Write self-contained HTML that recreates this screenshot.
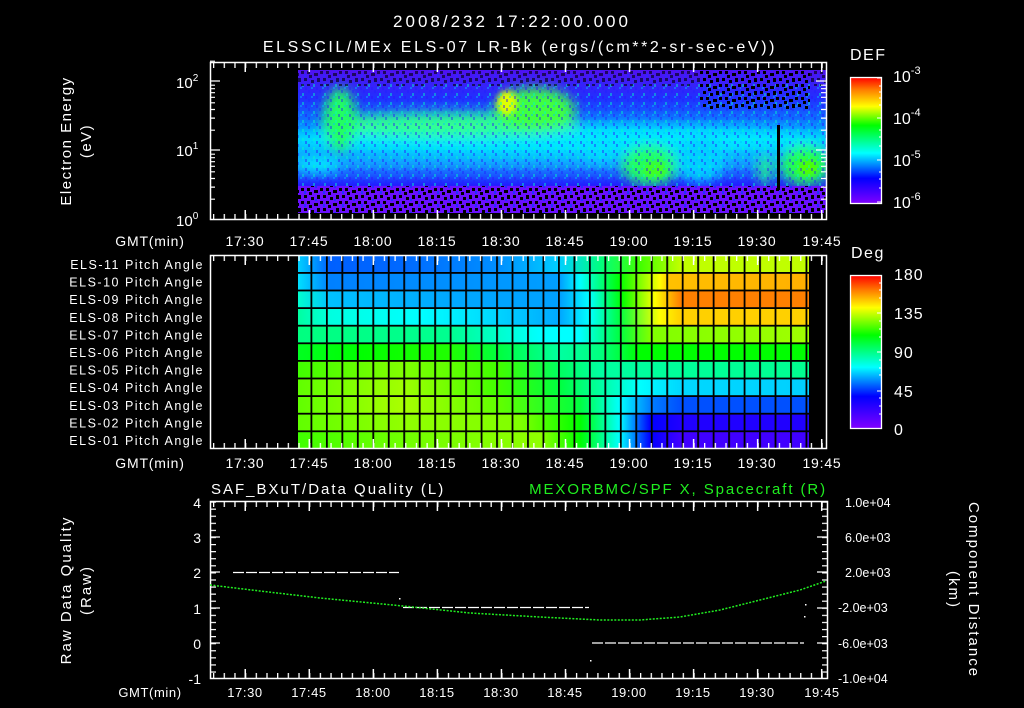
<!DOCTYPE html>
<html><head><meta charset="utf-8"><style>
html,body{margin:0;padding:0;background:#000;width:1024px;height:708px;overflow:hidden}
svg{display:block}
text{font-family:"Liberation Sans",sans-serif;fill:#fff}
</style></head><body>
<svg width="1024" height="708" viewBox="0 0 1024 708" xmlns="http://www.w3.org/2000/svg">
<defs>
<pattern id="minT" x="245" y="0" width="10.675" height="708" patternUnits="userSpaceOnUse"><rect x="0" y="0" width="1.3" height="708" fill="#fff"/></pattern>
<pattern id="majT" x="244.5" y="0" width="64.05" height="708" patternUnits="userSpaceOnUse"><rect x="0" y="0" width="1.5" height="708" fill="#fff"/></pattern>
<pattern id="vgrid" x="310.5" y="0" width="15.47" height="708" patternUnits="userSpaceOnUse"><rect x="0" y="0" width="1.8" height="708" fill="#000"/></pattern>
<pattern id="lqT" x="0" y="501.5" width="1024" height="7.08" patternUnits="userSpaceOnUse"><rect x="0" y="0" width="1024" height="1.2" fill="#fff"/></pattern>
<pattern id="speck" x="0" y="0" width="19" height="13" patternUnits="userSpaceOnUse">
<rect x="0" y="0" width="3" height="3" fill="#000"/><rect x="7" y="2" width="3" height="3" fill="#000"/><rect x="13" y="0" width="3" height="4" fill="#000"/><rect x="3" y="6" width="3" height="3" fill="#000"/><rect x="10" y="8" width="4" height="3" fill="#000"/><rect x="16" y="6" width="3" height="3" fill="#000"/><rect x="5" y="10" width="3" height="3" fill="#000"/><rect x="11" y="4" width="2" height="2" fill="#2030ff"/><rect x="0" y="9" width="2" height="3" fill="#2030ff"/></pattern>
<pattern id="noise" x="0" y="0" width="11" height="9" patternUnits="userSpaceOnUse">
<rect x="0" y="0" width="2" height="3" fill="#2020ff"/><rect x="5" y="3" width="2" height="3" fill="#00ffc0"/><rect x="8" y="6" width="2" height="3" fill="#3010ff"/><rect x="3" y="6" width="2" height="2" fill="#00c0ff"/></pattern>
<linearGradient id="defbar" x1="0" y1="0" x2="0" y2="1">
<stop offset="0" stop-color="#ff0000"/><stop offset="0.1" stop-color="#ff8000"/><stop offset="0.23" stop-color="#ffff00"/><stop offset="0.38" stop-color="#00ff00"/><stop offset="0.6" stop-color="#00ffff"/><stop offset="0.8" stop-color="#0000ff"/><stop offset="1" stop-color="#8000ff"/></linearGradient>
<linearGradient id="degbar" x1="0" y1="0" x2="0" y2="1">
<stop offset="0" stop-color="#ff0000"/><stop offset="0.1" stop-color="#ff8000"/><stop offset="0.21" stop-color="#ffff00"/><stop offset="0.39" stop-color="#00ff00"/><stop offset="0.6" stop-color="#00ffff"/><stop offset="0.79" stop-color="#0000ff"/><stop offset="1" stop-color="#8000ff"/></linearGradient>
<linearGradient id="specv" x1="0" y1="70" x2="0" y2="213" gradientUnits="userSpaceOnUse">
<stop offset="0" stop-color="#5010f0"/><stop offset="0.2" stop-color="#2030ff"/><stop offset="0.45" stop-color="#00a0ff"/><stop offset="0.65" stop-color="#10a0ff"/><stop offset="0.8" stop-color="#2020ff"/><stop offset="0.88" stop-color="#6010ff"/><stop offset="1" stop-color="#6a00ff"/></linearGradient>
<filter id="bl" x="-20%" y="-50%" width="140%" height="200%"><feGaussianBlur stdDeviation="6"/></filter>
<filter id="bl2" x="-20%" y="-50%" width="140%" height="200%"><feGaussianBlur stdDeviation="3"/></filter>
<clipPath id="specclip"><rect x="298" y="70" width="528" height="143"/></clipPath>
<linearGradient id="r11" x1="298" x2="809" y1="0" y2="0" gradientUnits="userSpaceOnUse"><stop offset="0" stop-color="#00d0ff"/><stop offset=".063" stop-color="#0060ff"/><stop offset=".2" stop-color="#0068ff"/><stop offset=".395" stop-color="#0090ff"/><stop offset=".513" stop-color="#00d0ff"/><stop offset=".591" stop-color="#00ff80"/><stop offset=".669" stop-color="#40ff00"/><stop offset=".748" stop-color="#c0ff00"/><stop offset="1" stop-color="#c0ff00"/></linearGradient>
<linearGradient id="r10" x1="298" x2="809" y1="0" y2="0" gradientUnits="userSpaceOnUse"><stop offset="0" stop-color="#00e0ff"/><stop offset=".063" stop-color="#0080ff"/><stop offset=".297" stop-color="#0090ff"/><stop offset=".513" stop-color="#00a0ff"/><stop offset=".552" stop-color="#00ffff"/><stop offset=".630" stop-color="#00ff00"/><stop offset=".708" stop-color="#ffff00"/><stop offset=".728" stop-color="#ffc000"/><stop offset="1" stop-color="#ffb000"/></linearGradient>
<linearGradient id="r9" x1="298" x2="809" y1="0" y2="0" gradientUnits="userSpaceOnUse"><stop offset="0" stop-color="#00ffd0"/><stop offset=".063" stop-color="#00c0ff"/><stop offset=".297" stop-color="#00a8ff"/><stop offset=".513" stop-color="#00a0ff"/><stop offset=".571" stop-color="#00ffff"/><stop offset=".634" stop-color="#00ff00"/><stop offset=".699" stop-color="#ffff00"/><stop offset=".748" stop-color="#ff8000"/><stop offset="1" stop-color="#ff8000"/></linearGradient>
<linearGradient id="r8" x1="298" x2="809" y1="0" y2="0" gradientUnits="userSpaceOnUse"><stop offset="0" stop-color="#00ffa0"/><stop offset=".063" stop-color="#00ffe0"/><stop offset=".239" stop-color="#00ffff"/><stop offset=".356" stop-color="#00e0ff"/><stop offset=".513" stop-color="#00a8ff"/><stop offset=".571" stop-color="#00ffff"/><stop offset=".630" stop-color="#00ff40"/><stop offset=".708" stop-color="#ffff00"/><stop offset=".748" stop-color="#ffd000"/><stop offset="1" stop-color="#ffd000"/></linearGradient>
<linearGradient id="r7" x1="298" x2="809" y1="0" y2="0" gradientUnits="userSpaceOnUse"><stop offset="0" stop-color="#00ff80"/><stop offset=".297" stop-color="#00ff90"/><stop offset=".474" stop-color="#00ffff"/><stop offset=".552" stop-color="#00ffff"/><stop offset=".630" stop-color="#00ff40"/><stop offset=".689" stop-color="#80ff00"/><stop offset="1" stop-color="#a0ff00"/></linearGradient>
<linearGradient id="r6" x1="298" x2="809" y1="0" y2="0" gradientUnits="userSpaceOnUse"><stop offset="0" stop-color="#00ff20"/><stop offset=".121" stop-color="#00ff00"/><stop offset=".297" stop-color="#20ff00"/><stop offset=".395" stop-color="#00ff40"/><stop offset=".513" stop-color="#00ffa0"/><stop offset=".591" stop-color="#00ff80"/><stop offset=".669" stop-color="#00ff00"/><stop offset="1" stop-color="#00ff00"/></linearGradient>
<linearGradient id="r5" x1="298" x2="809" y1="0" y2="0" gradientUnits="userSpaceOnUse"><stop offset="0" stop-color="#40ff00"/><stop offset=".2" stop-color="#80ff00"/><stop offset=".395" stop-color="#40ff00"/><stop offset=".513" stop-color="#00ff60"/><stop offset=".591" stop-color="#00ffa0"/><stop offset="1" stop-color="#00ff90"/></linearGradient>
<linearGradient id="r4" x1="298" x2="809" y1="0" y2="0" gradientUnits="userSpaceOnUse"><stop offset="0" stop-color="#60ff00"/><stop offset=".2" stop-color="#a0ff00"/><stop offset=".395" stop-color="#40ff00"/><stop offset=".513" stop-color="#00ff40"/><stop offset=".591" stop-color="#00ffa0"/><stop offset=".669" stop-color="#00ffff"/><stop offset=".748" stop-color="#00d8ff"/><stop offset="1" stop-color="#00d0ff"/></linearGradient>
<linearGradient id="r3" x1="298" x2="809" y1="0" y2="0" gradientUnits="userSpaceOnUse"><stop offset="0" stop-color="#60ff00"/><stop offset=".2" stop-color="#a8ff00"/><stop offset=".395" stop-color="#60ff00"/><stop offset=".552" stop-color="#00ff40"/><stop offset=".630" stop-color="#00ffff"/><stop offset=".689" stop-color="#0080ff"/><stop offset=".748" stop-color="#0050ff"/><stop offset="1" stop-color="#0050ff"/></linearGradient>
<linearGradient id="r2" x1="298" x2="809" y1="0" y2="0" gradientUnits="userSpaceOnUse"><stop offset="0" stop-color="#60ff00"/><stop offset=".2" stop-color="#90ff00"/><stop offset=".434" stop-color="#80ff00"/><stop offset=".552" stop-color="#00ff00"/><stop offset=".630" stop-color="#00ffff"/><stop offset=".689" stop-color="#0000ff"/><stop offset=".748" stop-color="#2000ff"/><stop offset="1" stop-color="#2000ff"/></linearGradient>
<linearGradient id="r1" x1="298" x2="809" y1="0" y2="0" gradientUnits="userSpaceOnUse"><stop offset="0" stop-color="#40ff00"/><stop offset=".2" stop-color="#70ff00"/><stop offset=".474" stop-color="#90ff00"/><stop offset=".552" stop-color="#00ff00"/><stop offset=".630" stop-color="#00ffff"/><stop offset=".689" stop-color="#0000ff"/><stop offset=".748" stop-color="#4000ff"/><stop offset="1" stop-color="#4000ff"/></linearGradient>
</defs>

<text x="512" y="27" font-size="17" text-anchor="middle" letter-spacing="3">2008/232 17:22:00.000</text>
<text x="520" y="52" font-size="16" text-anchor="middle" letter-spacing="2.6">ELSSCIL/MEx ELS-07 LR-Bk  (ergs/(cm**2-sr-sec-eV))</text>

<g clip-path="url(#specclip)">
<rect x="298" y="70" width="528" height="143" fill="url(#specv)"/>
<g filter="url(#bl)">
<ellipse cx="560" cy="140" rx="280" ry="16" fill="#00e8ff"/>
<ellipse cx="450" cy="125" rx="130" ry="12" fill="#30ff90"/>
<ellipse cx="340" cy="120" rx="16" ry="32" fill="#20ff60"/>
<ellipse cx="318" cy="165" rx="22" ry="7" fill="#00f0ff"/>
<ellipse cx="535" cy="110" rx="40" ry="22" fill="#40ff40"/>
<ellipse cx="650" cy="165" rx="28" ry="20" fill="#20ff60"/>
<ellipse cx="700" cy="160" rx="25" ry="22" fill="#00d0ff"/>
<ellipse cx="805" cy="165" rx="24" ry="20" fill="#20ff50"/>
<ellipse cx="600" cy="150" rx="20" ry="12" fill="#00e0ff"/>
<ellipse cx="765" cy="170" rx="6" ry="16" fill="#20ff80"/>
</g>
<g filter="url(#bl2)">
<ellipse cx="507" cy="103" rx="10" ry="12" fill="#e0ff00"/>
<ellipse cx="655" cy="170" rx="12" ry="8" fill="#40ff20"/>
<ellipse cx="808" cy="168" rx="10" ry="8" fill="#50ff00"/>
</g>
<rect x="298" y="84" width="528" height="102" fill="url(#noise)" opacity="0.45"/>
<rect x="298" y="186" width="528" height="27" fill="#6a10ff"/>
<rect x="298" y="186" width="528" height="27" fill="url(#speck)"/>
<rect x="298" y="70" width="528" height="16" fill="url(#speck)" opacity="0.6"/>
<rect x="700" y="70" width="110" height="40" fill="url(#speck)"/>
<rect x="777" y="125" width="3" height="65" fill="#000"/>
</g>
<rect x="210.5" y="62.5" width="616" height="157" fill="none" stroke="#fff" stroke-width="1.5"/>
<rect x="211" y="62" width="615" height="6" fill="url(#minT)"/>
<rect x="211" y="62" width="615" height="10" fill="url(#majT)"/>
<rect x="211" y="214" width="615" height="6" fill="url(#minT)"/>
<rect x="211" y="210" width="615" height="10" fill="url(#majT)"/>
<g stroke="#fff" stroke-width="1.2">
<path d="M210 150h10M210 81h10M210 199.2h5M210 187.1h5M210 178.5h5M210 171.8h5M210 166.3h5M210 161.7h5M210 157.7h5M210 154.2h5M210 130.2h5M210 118.1h5M210 109.5h5M210 102.8h5M210 97.3h5M210 92.7h5M210 88.7h5M210 85.2h5M210 61.2h5"/>
<path d="M826 150h-10M826 81h-10M826 199.2h-5M826 187.1h-5M826 178.5h-5M826 171.8h-5M826 166.3h-5M826 161.7h-5M826 157.7h-5M826 154.2h-5M826 130.2h-5M826 118.1h-5M826 109.5h-5M826 102.8h-5M826 97.3h-5M826 92.7h-5M826 88.7h-5M826 85.2h-5"/>
</g>
<text x="176" y="226" font-size="15">10<tspan font-size="10" dy="-7">0</tspan></text>
<text x="176" y="156" font-size="15">10<tspan font-size="10" dy="-7">1</tspan></text>
<text x="176" y="88" font-size="15">10<tspan font-size="10" dy="-7">2</tspan></text>
<text transform="translate(71 141) rotate(-90)" font-size="15" text-anchor="middle" letter-spacing="1.5">Electron Energy</text>
<text transform="translate(91 141) rotate(-90)" font-size="15" text-anchor="middle" letter-spacing="1.5">(eV)</text>
<g font-size="14" text-anchor="middle" letter-spacing="0.8">
<text x="150" y="246">GMT(min)</text>
<text x="245" y="246">17:30</text><text x="309" y="246">17:45</text><text x="373" y="246">18:00</text><text x="437" y="246">18:15</text><text x="501" y="246">18:30</text><text x="565" y="246">18:45</text><text x="629" y="246">19:00</text><text x="693" y="246">19:15</text><text x="757" y="246">19:30</text><text x="822" y="246">19:45</text>
</g>
<text x="850" y="60" font-size="16" letter-spacing="1.5">DEF</text>
<rect x="850.5" y="77.5" width="31" height="126" fill="url(#defbar)" stroke="#fff" stroke-width="1.3"/>
<g stroke="#fff" stroke-width="1"><path d="M882 78h-5M882 86h-3M882 92h-3M882 98h-3M882 105h-3M882 118h-5M882 130h-3M882 137h-3M882 146h-3M882 160h-5M882 172h-3M882 179h-3M882 188h-3M882 202h-5"/></g>
<g font-size="16"><text x="893" y="82">10<tspan font-size="11" dy="-8">-3</tspan></text><text x="893" y="124">10<tspan font-size="11" dy="-8">-4</tspan></text><text x="893" y="166">10<tspan font-size="11" dy="-8">-5</tspan></text><text x="893" y="208">10<tspan font-size="11" dy="-8">-6</tspan></text></g>

<rect x="298" y="255" width="511" height="17.7" fill="url(#r11)"/>
<rect x="298" y="272.6" width="511" height="17.7" fill="url(#r10)"/>
<rect x="298" y="290.2" width="511" height="17.7" fill="url(#r9)"/>
<rect x="298" y="307.8" width="511" height="17.7" fill="url(#r8)"/>
<rect x="298" y="325.4" width="511" height="17.7" fill="url(#r7)"/>
<rect x="298" y="343" width="511" height="17.7" fill="url(#r6)"/>
<rect x="298" y="360.6" width="511" height="17.7" fill="url(#r5)"/>
<rect x="298" y="378.2" width="511" height="17.7" fill="url(#r4)"/>
<rect x="298" y="395.8" width="511" height="17.7" fill="url(#r3)"/>
<rect x="298" y="413.4" width="511" height="17.7" fill="url(#r2)"/>
<rect x="298" y="431" width="511" height="18" fill="url(#r1)"/>
<rect x="298" y="255" width="511" height="194" fill="url(#vgrid)"/>
<g fill="#000"><rect x="298" y="272" width="511" height="1.8"/><rect x="298" y="289.6" width="511" height="1.8"/><rect x="298" y="307.2" width="511" height="1.8"/><rect x="298" y="324.8" width="511" height="1.8"/><rect x="298" y="342.4" width="511" height="1.8"/><rect x="298" y="360" width="511" height="1.8"/><rect x="298" y="377.6" width="511" height="1.8"/><rect x="298" y="395.2" width="511" height="1.8"/><rect x="298" y="412.8" width="511" height="1.8"/><rect x="298" y="430.4" width="511" height="1.8"/></g>
<rect x="210.5" y="255.5" width="616" height="193" fill="none" stroke="#fff" stroke-width="1.5"/>
<rect x="211" y="255" width="615" height="6" fill="url(#minT)"/>
<rect x="211" y="255" width="615" height="10" fill="url(#majT)"/>
<rect x="211" y="443" width="615" height="6" fill="url(#minT)"/>
<rect x="211" y="439" width="615" height="10" fill="url(#majT)"/>
<g font-size="12.5" text-anchor="end" letter-spacing="1.5">
<text x="204" y="269">ELS-11 Pitch Angle</text><text x="204" y="286.6">ELS-10 Pitch Angle</text><text x="204" y="304.2">ELS-09 Pitch Angle</text><text x="204" y="321.8">ELS-08 Pitch Angle</text><text x="204" y="339.4">ELS-07 Pitch Angle</text><text x="204" y="357">ELS-06 Pitch Angle</text><text x="204" y="374.6">ELS-05 Pitch Angle</text><text x="204" y="392.2">ELS-04 Pitch Angle</text><text x="204" y="409.8">ELS-03 Pitch Angle</text><text x="204" y="427.4">ELS-02 Pitch Angle</text><text x="204" y="445">ELS-01 Pitch Angle</text>
</g>
<g font-size="14" text-anchor="middle" letter-spacing="0.8">
<text x="150" y="468">GMT(min)</text>
<text x="245" y="468">17:30</text><text x="309" y="468">17:45</text><text x="373" y="468">18:00</text><text x="437" y="468">18:15</text><text x="501" y="468">18:30</text><text x="565" y="468">18:45</text><text x="629" y="468">19:00</text><text x="693" y="468">19:15</text><text x="757" y="468">19:30</text><text x="822" y="468">19:45</text>
</g>
<text x="851" y="258" font-size="16" letter-spacing="1.5">Deg</text>
<rect x="850.5" y="275.5" width="31" height="153" fill="url(#degbar)" stroke="#fff" stroke-width="1.3"/>
<g stroke="#fff" stroke-width="1"><path d="M882 283h-3M882 290h-3M882 298h-3M882 313h-5M882 321h-3M882 329h-3M882 337h-3M882 352h-5M882 360h-3M882 368h-3M882 375h-3M882 391h-5M882 398h-3M882 406h-3M882 414h-3"/></g>
<g font-size="16" letter-spacing="1"><text x="894" y="280">180</text><text x="894" y="319">135</text><text x="894" y="358">90</text><text x="894" y="397">45</text><text x="894" y="435">0</text></g>

<text x="211" y="494" font-size="15" letter-spacing="2">SAF_BXuT/Data Quality (L)</text>
<text x="827" y="494" font-size="15" text-anchor="end" style="fill:#20ee20" letter-spacing="1.9">MEXORBMC/SPF X, Spacecraft (R)</text>
<rect x="210.5" y="501.5" width="617" height="177" fill="none" stroke="#fff" stroke-width="1.5"/>
<rect x="211" y="501" width="616" height="6" fill="url(#minT)"/>
<rect x="211" y="501" width="616" height="10" fill="url(#majT)"/>
<rect x="211" y="673" width="616" height="6" fill="url(#minT)"/>
<rect x="211" y="669" width="616" height="10" fill="url(#majT)"/>
<rect x="210" y="502" width="6" height="177" fill="url(#lqT)"/>
<rect x="822" y="502" width="6" height="177" fill="url(#lqT)"/>
<g stroke="#fff" stroke-width="1.3"><path d="M210 537h10M210 572h10M210 608h10M210 643h10M827 537h-10M827 572h-10M827 608h-10M827 643h-10"/></g>
<g font-size="14" text-anchor="end"><text x="201" y="508">4</text><text x="201" y="543">3</text><text x="201" y="578">2</text><text x="201" y="614">1</text><text x="201" y="649">0</text><text x="201" y="684">-1</text></g>
<g font-size="12.5"><text x="845" y="507">1.0e+04</text><text x="845" y="542">6.0e+03</text><text x="845" y="577">2.0e+03</text><text x="838" y="612">-2.0e+03</text><text x="838" y="648">-6.0e+03</text><text x="838" y="683">-1.0e+04</text></g>
<text transform="translate(71 590) rotate(-90)" font-size="15" text-anchor="middle" letter-spacing="2">Raw Data Quality</text>
<text transform="translate(91 590) rotate(-90)" font-size="15" text-anchor="middle" letter-spacing="2">(Raw)</text>
<text transform="translate(969 590) rotate(90)" font-size="15" text-anchor="middle" letter-spacing="2">Component Distance</text>
<text transform="translate(949 590) rotate(90)" font-size="15" text-anchor="middle" letter-spacing="2">(km)</text>
<g stroke="#fff" stroke-width="1.3" stroke-dasharray="11 2" fill="none">
<path d="M233 572.5H399"/><path d="M403 607.5H589"/><path d="M592 643H804"/>
</g>
<g fill="#fff"><rect x="399" y="598" width="1.5" height="1.5"/><rect x="590" y="660" width="1.5" height="1.5"/><rect x="805" y="604" width="1.5" height="1.5"/><rect x="804" y="616" width="1.5" height="1.5"/></g>
<polyline points="210,585 260,591 320,598 403,606 470,613 540,617 600,620 640,620 680,617 720,610 760,600 800,590 826,581" fill="none" stroke="#20ee20" stroke-width="1.5" stroke-dasharray="2 1.5"/>
<g font-size="13" text-anchor="middle" letter-spacing="0.6">
<text x="150" y="697">GMT(min)</text>
<text x="245" y="697">17:30</text><text x="309" y="697">17:45</text><text x="373" y="697">18:00</text><text x="437" y="697">18:15</text><text x="501" y="697">18:30</text><text x="565" y="697">18:45</text><text x="629" y="697">19:00</text><text x="693" y="697">19:15</text><text x="757" y="697">19:30</text><text x="822" y="697">19:45</text>
</g>
</svg>
</body></html>
